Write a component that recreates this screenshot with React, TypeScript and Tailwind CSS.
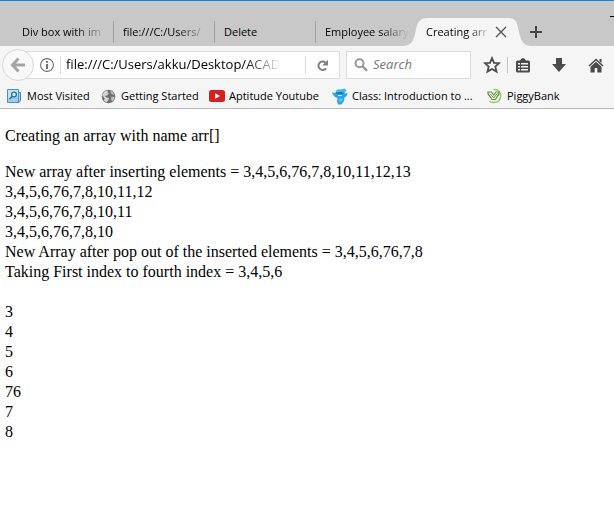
import React from "react";

const ui = "font-['Open_Sans','Noto_Sans',sans-serif]";

function ActiveTabShape() {
  return (
    <svg className="absolute inset-0 h-full w-full" viewBox="0 0 126 28" preserveAspectRatio="none" aria-hidden="true">
      <path d="M0 28C7 27 9 24 11 16C13 6 14 0 24 0H103C113 0 113 5 115 14C117 23 119 27 126 28Z" fill="#f5f5f5" />
    </svg>
  );
}

function BackIcon() {
  return (
    <svg width="16" height="16" viewBox="0 0 16 16" fill="none" stroke="#a4a4a4" strokeWidth="3" aria-hidden="true">
      <path d="M15 8H3M8.5 1.5L2.5 8L8.5 14.5" />
    </svg>
  );
}

function InfoIcon() {
  return (
    <svg width="16" height="16" viewBox="0 0 16 16" aria-hidden="true">
      <circle cx="8" cy="8" r="6.4" fill="none" stroke="#6f6f6f" strokeWidth="1.1" />
      <path d="M7 4h2v1.7H7zM7 7h2v5H7z" fill="#6f6f6f" />
    </svg>
  );
}

function ReloadIcon() {
  return (
    <svg width="13" height="13" viewBox="0 0 13 13" aria-hidden="true">
      <path d="M10 9.3A4.2 4.2 0 1 1 9.4 3.6" fill="none" stroke="#808080" strokeWidth="2" />
      <path d="M12 .8V6.5H6.2Z" fill="#808080" />
    </svg>
  );
}

function SearchIcon() {
  return (
    <svg width="14" height="14" viewBox="0 0 14 14" fill="none" stroke="#989898" strokeWidth="2" aria-hidden="true">
      <circle cx="5.5" cy="5.2" r="4" />
      <path d="M8.5 8.2L13 12.8" strokeWidth="2.4" />
    </svg>
  );
}

function StarIcon() {
  return (
    <svg width="18" height="18" viewBox="0 0 18 18" aria-hidden="true">
      <path d="M9 2.2L11 6.8L16 7.2L12.3 10.6L13.5 15.6L9 13L4.5 15.6L5.7 10.6L2 7.2L7 6.8Z" fill="none" stroke="#4a4a4a" strokeWidth="1.8" />
    </svg>
  );
}

function ClipboardIcon() {
  return (
    <svg width="14" height="15" viewBox="0 0 14 15" aria-hidden="true">
      <path d="M4 2.5C4.5 2.5 5 0 7 0S9.5 2.5 10 2.5H12.5Q14 2.5 14 4V13Q14 14.5 12.5 14.5H1.5Q0 14.5 0 13V4Q0 2.5 1.5 2.5Z" fill="#4a4a4a" />
      <path d="M2 5h2v1.5H2zM5 5h7v1.5H5zM2 8h2v1.5H2zM5 8h7v1.5H5zM2 11h2v1.5H2zM5 11h7v1.5H5z" fill="#f5f5f5" />
    </svg>
  );
}

function DownloadIcon() {
  return (
    <svg width="14" height="14" viewBox="0 0 14 14" aria-hidden="true">
      <path d="M4 .5Q4 0 4.5 0H9.5Q10 0 10 .5V6H14L7 14L0 6H4Z" fill="#4a4a4a" />
    </svg>
  );
}

function HomeIcon() {
  return (
    <svg width="16" height="15" viewBox="0 0 16 15" aria-hidden="true">
      <path d="M1 8L8 1.5L15 8" fill="none" stroke="#4a4a4a" strokeWidth="1.6" />
      <path d="M11.5 1H13.5V5L11.5 3.2Z" fill="#4a4a4a" />
      <path d="M2.5 8.8L8 3.7L13.5 8.8V14.5H9.3V10H6.7V14.5H2.5Z" fill="#4a4a4a" />
    </svg>
  );
}

function VisitedIcon() {
  return (
    <svg width="15" height="16" viewBox="0 0 15 16" aria-hidden="true">
      <path d="M11 4.5H13.5V12.5L12 14.5H10Z" fill="#a9d4ef" stroke="#3f86b8" />
      <path d="M.5 1.5H11.5V14.5H.5Z" fill="#9ccdeb" stroke="#4a92c2" />
      <path d="M1 2H11V8L1 11Z" fill="#c1e1f4" />
      <circle cx="7" cy="6.5" r="2.4" fill="#d5edf9" stroke="#326b91" strokeWidth="1.3" />
      <path d="M5.3 8.3L2.5 11" stroke="#326b91" strokeWidth="1.7" />
    </svg>
  );
}

function GlobeIcon() {
  return (
    <svg width="15" height="15" viewBox="0 0 15 15" aria-hidden="true">
      <circle cx="7.5" cy="7.5" r="6.8" fill="#6e6e6e" />
      <path d="M1 6L4 2L7 1.5L6.5 3.5L8 4.5L6 6.5L4 7L5.5 8.5L8 9L7.5 11L5.5 13.5L3 12L3.5 9.5Z" fill="#d3d3d3" />
      <path d="M9 1.5L12 3.2L13.5 6L11.5 5.5L10 4.5L9.5 3ZM10.5 7.5L13.7 8L12.5 11.5L11 12.5L10 10Z" fill="#bcbcbc" />
    </svg>
  );
}

function VideoIcon() {
  return (
    <svg width="16" height="12" viewBox="0 0 16 12" aria-hidden="true">
      <rect width="16" height="12" rx="2.5" fill="#d4201f" />
      <path d="M6.2 3.2L11 6L6.2 8.8Z" fill="#fff" />
    </svg>
  );
}

function ClassIcon() {
  return (
    <svg width="16" height="17" viewBox="0 0 16 17" aria-hidden="true">
      <path d="M3.5 4Q4.500 .5 8 1.500L13 .5L14.500 2.500L12 5.500L4.500 5.500Z" fill="#49b6ec" />
      <path d="M0 4Q2 5.500 4 4.500L12 5Q14 6 15.500 4.500Q15.500 8.500 12.500 9.500L12 13L9.500 16.500H6L5 13L5.500 10Q1 9 0 4Z" fill="#2ba5e3" />
      <path d="M3.500 4.700Q8 3.500 12 4.800L11 6H5Z" fill="#1776b8" />
      <path d="M6 7h4v1H6z" fill="#b8e7ff" />
      <path d="M6.500 11L11 10.500L10 13L7.500 14Z" fill="#64c7f2" />
    </svg>
  );
}

function PiggyIcon() {
  return (
    <svg width="15" height="16" viewBox="0 0 15 16" fill="none" aria-hidden="true">
      <path d="M6.500 1.500Q13.500 1 13.700 7.500Q13.500 14.500 7 14.500Q4 14.500 2.500 13" stroke="#9ac96c" strokeWidth="1.500" />
      <path d="M.8 4H4.500L6.800 7L9 4H12.200Q12.200 7 10.200 8.500L8.500 11.500H5L3 8.500Q.8 7 .8 4Z" fill="#f8fff0" stroke="#5f8f3c" strokeWidth="1.200" />
      <path d="M3 5.500L6.800 10L10.200 5.500" stroke="#5f8f3c" strokeWidth="1" />
    </svg>
  );
}

const tabs = ["Div box with im", "file:///C:/Users/", "Delete", "Employee salary"];

const bookmarks = [
  { label: "Most Visited", icon: <VisitedIcon />, width: "w-[94px]" },
  { label: "Getting Started", icon: <GlobeIcon />, width: "w-[108px]" },
  { label: "Aptitude Youtube", icon: <VideoIcon />, width: "w-[123px]" },
  { label: "Class: Introduction to ...", icon: <ClassIcon />, width: "w-[155px]" },
  { label: "PiggyBank", icon: <PiggyIcon />, width: "w-[90px]" },
];

const popped = [
  "New array after inserting elements = 3,4,5,6,76,7,8,10,11,12,13",
  "3,4,5,6,76,7,8,10,11,12",
  "3,4,5,6,76,7,8,10,11",
  "3,4,5,6,76,7,8,10",
  "New Array after pop out of the inserted elements = 3,4,5,6,76,7,8",
  "Taking First index to fourth index = 3,4,5,6",
];

const items = [3, 4, 5, 6, 76, 7, 8];

export default function App() {
  return (
    <div className="min-h-screen overflow-hidden bg-white text-black">
      <header className={`${ui} text-[11px]`}>
        <div className="flex h-[46px] items-end border-t border-[#1a7fd6] bg-[#c8c8c8]">
          <nav className="flex shrink-0 items-end pl-[13px]" aria-label="Tabs">
            {tabs.map((tab, i) => (
              <button
                key={tab}
                className={`mb-[3px] flex h-[22px] w-[101px] items-center pl-[9px] ${i < 3 ? "border-r border-[#a0a0a0]" : "-mr-[13px]"}`}
              >
                <span
                  className={`w-[84px] text-left whitespace-nowrap ${tab === "Delete" ? "" : "[mask-image:linear-gradient(to_right,black_65%,transparent)]"}`}
                >
                  {tab}
                </span>
              </button>
            ))}
            <div className="relative flex h-7 w-[126px] items-center pr-[23px] pl-[22px]">
              <ActiveTabShape />
              <button className="relative w-[65px] text-left whitespace-nowrap [mask-image:linear-gradient(to_right,black_65%,transparent)]">
                Creating arr
              </button>
              <button className="relative ml-1" aria-label="Close tab">
                <svg width="12" height="12" viewBox="0 0 12 12" stroke="#555" strokeWidth="1.4" aria-hidden="true">
                  <path d="M1 1L11 11M11 1L1 11" />
                </svg>
              </button>
            </div>
          </nav>
          <button className="mb-2" aria-label="New tab">
            <svg width="12" height="12" viewBox="0 0 12 12" stroke="#444" strokeWidth="2" aria-hidden="true">
              <path d="M6 0V12M0 6H12" />
            </svg>
          </button>
          <button className="mb-[29px] ml-auto h-px w-1 bg-black" aria-label="Minimize" />
        </div>

        <div className="flex h-[38px] items-center bg-[#f5f5f5] pl-[2px]">
          <button
            className="z-10 flex h-8 w-8 shrink-0 items-center justify-center rounded-full border border-[#d8d8d8] bg-[#f8f8f8]"
            aria-label="Back"
          >
            <BackIcon />
          </button>
          <div className="-ml-2 flex h-7 min-w-0 flex-1 items-center border border-[#dcdcdc] bg-white pl-3">
            <button className="shrink-0" aria-label="Site information">
              <InfoIcon />
            </button>
            <span className="ml-[5px] h-[18px] w-px shrink-0 bg-[#dcdcdc]" />
            <input
              aria-label="Address"
              defaultValue="file:///C:/Users/akku/Desktop/ACAD"
              className="ml-[5px] min-w-0 flex-1 bg-transparent text-[13px] outline-none [mask-image:linear-gradient(to_right,black_83%,transparent)]"
            />
            <span className="ml-6 h-[18px] w-px shrink-0 bg-[#dcdcdc]" />
            <button className="flex w-[33px] shrink-0 justify-center" aria-label="Reload">
              <ReloadIcon />
            </button>
          </div>
          <label className="ml-[6px] flex h-7 w-[125px] shrink-0 items-center border border-[#dcdcdc] bg-white pl-[7px]">
            <SearchIcon />
            <input
              aria-label="Search"
              placeholder="Search"
              className="ml-[5px] w-[90px] bg-transparent text-[13px] italic outline-none placeholder:text-[#757575]"
            />
          </label>
          <div className="flex w-[143px] shrink-0 items-center pl-3">
            <button aria-label="Bookmark this page">
              <StarIcon />
            </button>
            <span className="ml-[6px] h-4 w-px bg-[#c4c4c4]" />
            <button className="ml-2" aria-label="Show bookmarks">
              <ClipboardIcon />
            </button>
            <button className="ml-[22px]" aria-label="Downloads">
              <DownloadIcon />
            </button>
            <button className="ml-[22px]" aria-label="Home">
              <HomeIcon />
            </button>
          </div>
        </div>

        <nav className="flex h-[25px] items-center border-b border-[#b6b6b6] bg-[#f5f5f5] pl-[7px]" aria-label="Bookmarks">
          {bookmarks.map((b) => (
            <a key={b.label} href="#" className={`flex shrink-0 items-center whitespace-nowrap ${b.width}`}>
              <span className="flex w-5 shrink-0">{b.icon}</span>
              {b.label}
            </a>
          ))}
        </nav>
      </header>

      <main className="px-[5px] pt-[17px] font-['Liberation_Serif',serif] text-[16px] leading-5">
        <p className="mb-4">Creating an array with name arr[]</p>
        {popped.map((line) => (
          <div key={line}>{line}</div>
        ))}
        <div className="mt-5">
          {items.map((n) => (
            <div key={n}>{n}</div>
          ))}
        </div>
      </main>
    </div>
  );
}
